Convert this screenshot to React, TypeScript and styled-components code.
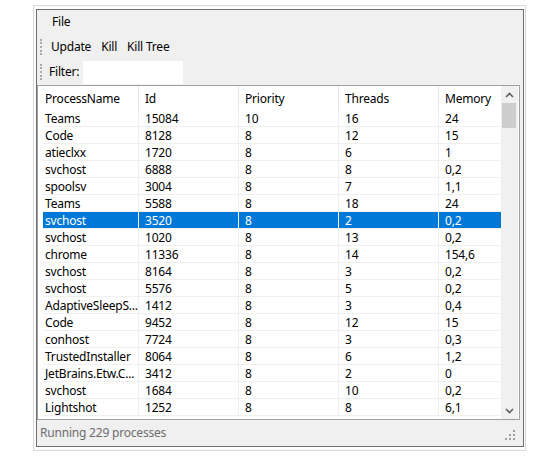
import React from 'react';
import styled, { createGlobalStyle } from 'styled-components';

const GlobalStyle = createGlobalStyle`
  html, body {
    margin: 0;
    padding: 0;
    background: #ffffff;
  }
  body {
    font-family: "Noto Sans", "Liberation Sans", sans-serif;
    font-size: 12px;
    letter-spacing: -0.2px;
    color: #000;
  }
`;

const Window = styled.div`
  box-sizing: border-box;
  margin: 5px 0 0 33px;
  width: 493px;
  height: 446px;
  border: 1px solid #d9d9d9;
  background: #fcfcfc;
  padding: 3px 1px 3px 2px;
`;

const Frame = styled.div`
  box-sizing: border-box;
  width: 488px;
  height: 438px;
  border: 1px solid #6f6f6f;
  background: #f0f0f0;
  display: flex;
  flex-direction: column;
`;

const MenuBar = styled.div`
  height: 24px;
  display: flex;
  align-items: center;
  padding-left: 9px;
`;

const MenuItem = styled.span`
  padding: 0 6px;
  line-height: 20px;
`;

const ToolStrip = styled.div<{ $h: number }>`
  height: ${(p) => p.$h}px;
  display: flex;
  align-items: center;
  padding-left: 3px;
`;

const Grip = styled.div<{ $gap: number }>`
  width: 0;
  height: 16px;
  border-left: 2px dotted #a8a8a8;
  margin-right: ${(p) => p.$gap}px;
`;

const ToolButton = styled.span`
  padding: 0 5px;
  line-height: 20px;
  white-space: nowrap;
`;

const FilterLabel = styled.span`
  width: 34px;
  line-height: 20px;
`;

const FilterInput = styled.div`
  width: 100px;
  height: 23px;
  background: #ffffff;
`;

const ListBox = styled.div`
  box-sizing: border-box;
  height: 335px;
  margin-right: 3px;
  border: 1px solid #a0a0a0;
  background: #ffffff;
  display: flex;
  overflow: hidden;
`;

const ListArea = styled.div`
  flex: 1;
  padding-left: 5px;
  overflow: hidden;
`;

const columns = '96px 100px 100px 100px 100px';

const HeaderRow = styled.div`
  display: grid;
  grid-template-columns: ${columns};
  height: 24px;
`;

const HeaderCell = styled.div<{ $first?: boolean }>`
  box-sizing: border-box;
  padding: 1px 0 0 ${(p) => (p.$first ? 2 : 6)}px;
  border-right: 1px solid #e5e5e5;
  line-height: 23px;
  white-space: nowrap;
  overflow: hidden;
`;

const Row = styled.div<{ $selected?: boolean }>`
  box-sizing: border-box;
  display: grid;
  grid-template-columns: ${columns};
  height: 17px;
  border-bottom: 1px solid #f0f0f0;
  background: ${(p) => (p.$selected ? '#0078d7' : 'transparent')};
  color: ${(p) => (p.$selected ? '#ffffff' : '#000000')};
`;

const Cell = styled.div<{ $first?: boolean }>`
  box-sizing: border-box;
  padding: 1px 0 0 ${(p) => (p.$first ? 2 : 6)}px;
  border-right: 1px solid #f0f0f0;
  line-height: 16px;
  white-space: nowrap;
  overflow: hidden;
`;

const ScrollBar = styled.div`
  width: 17px;
  margin-right: 1px;
  background: #f0f0f0;
  display: flex;
  flex-direction: column;
`;

const ScrollArrow = styled.div`
  height: 17px;
  display: flex;
  align-items: center;
  justify-content: center;
`;

const ScrollTrack = styled.div`
  flex: 1;
  padding: 0 2px 0 1px;
`;

const ScrollThumb = styled.div`
  height: 25px;
  background: #cdcdcd;
`;

const StatusBar = styled.div`
  flex: 1;
  display: flex;
  align-items: center;
  justify-content: space-between;
  padding: 0 8px 0 3px;
`;

const StatusText = styled.span`
  color: #6d6d6d;
  line-height: 20px;
`;

const SizeGrip = styled.svg`
  align-self: flex-end;
  margin-bottom: 6px;
`;

type Proc = [string, string, string, string, string];

const processes: Proc[] = [
  ['Teams', '15084', '10', '16', '24'],
  ['Code', '8128', '8', '12', '15'],
  ['atieclxx', '1720', '8', '6', '1'],
  ['svchost', '6888', '8', '8', '0,2'],
  ['spoolsv', '3004', '8', '7', '1,1'],
  ['Teams', '5588', '8', '18', '24'],
  ['svchost', '3520', '8', '2', '0,2'],
  ['svchost', '1020', '8', '13', '0,2'],
  ['chrome', '11336', '8', '14', '154,6'],
  ['svchost', '8164', '8', '3', '0,2'],
  ['svchost', '5576', '8', '5', '0,2'],
  ['AdaptiveSleepS...', '1412', '8', '3', '0,4'],
  ['Code', '9452', '8', '12', '15'],
  ['conhost', '7724', '8', '3', '0,3'],
  ['TrustedInstaller', '8064', '8', '6', '1,2'],
  ['JetBrains.Etw.C...', '3412', '8', '2', '0'],
  ['svchost', '1684', '8', '10', '0,2'],
  ['Lightshot', '1252', '8', '8', '6,1'],
];

const headers = ['ProcessName', 'Id', 'Priority', 'Threads', 'Memory'];
const selectedIndex = 6;

const Chevron = ({ up }: { up?: boolean }) => (
  <svg width="9" height="6" viewBox="0 0 9 6">
    <path
      d={up ? 'M1 5 L4.5 1.5 L8 5' : 'M1 1 L4.5 4.5 L8 1'}
      fill="none"
      stroke="#606060"
      strokeWidth="1.6"
    />
  </svg>
);

export default function App() {
  return (
    <>
      <GlobalStyle />
      <Window>
        <Frame>
          <MenuBar>
            <MenuItem>File</MenuItem>
          </MenuBar>
          <ToolStrip $h={25}>
            <Grip $gap={4} />
            <ToolButton>Update</ToolButton>
            <ToolButton>Kill</ToolButton>
            <ToolButton>Kill Tree</ToolButton>
          </ToolStrip>
          <ToolStrip $h={26}>
            <Grip $gap={7} />
            <FilterLabel>Filter:</FilterLabel>
            <FilterInput />
          </ToolStrip>
          <ListBox>
            <ListArea>
              <HeaderRow>
                {headers.map((h, i) => (
                  <HeaderCell key={h} $first={i === 0}>
                    {h}
                  </HeaderCell>
                ))}
              </HeaderRow>
              {processes.map((p, idx) => (
                <Row key={idx} $selected={idx === selectedIndex}>
                  {p.map((v, i) => (
                    <Cell key={i} $first={i === 0}>
                      {v}
                    </Cell>
                  ))}
                </Row>
              ))}
            </ListArea>
            <ScrollBar>
              <ScrollArrow>
                <Chevron up />
              </ScrollArrow>
              <ScrollTrack>
                <ScrollThumb />
              </ScrollTrack>
              <ScrollArrow>
                <Chevron />
              </ScrollArrow>
            </ScrollBar>
          </ListBox>
          <StatusBar>
            <StatusText>Running 229 processes</StatusText>
            <SizeGrip width="10" height="10" viewBox="0 0 10 10">
              {[
                [8, 0],
                [4, 4],
                [8, 4],
                [0, 8],
                [4, 8],
                [8, 8],
              ].map(([x, y], i) => (
                <rect key={i} x={x} y={y} width="2" height="2" fill="#a0a0a0" />
              ))}
            </SizeGrip>
          </StatusBar>
        </Frame>
      </Window>
    </>
  );
}
